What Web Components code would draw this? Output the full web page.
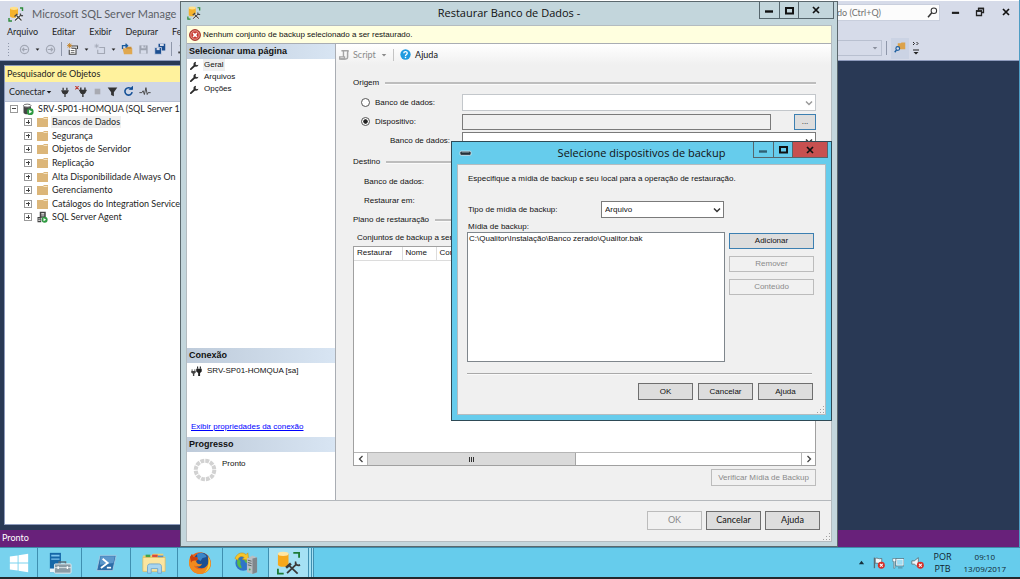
<!DOCTYPE html>
<html lang="pt-BR">
<head>
<meta charset="utf-8">
<title>Microsoft SQL Server Management Studio</title>
<style>
html, body { margin: 0; height: 100%; background: #14181c; overflow: hidden; }
body { font: 9px/12px Lato, "Open Sans", sans-serif; color: #1e1e1e; }
</style>
</head>
<body>
<desk-top>
  <ide-window></ide-window>
  <restore-dialog></restore-dialog>
  <device-dialog></device-dialog>
  <task-bar slot="taskbar"></task-bar>
</desk-top>
<script>
const define = (name, css, html) => customElements.define(name, class extends HTMLElement {
  constructor() {
    super();
    const t = document.createElement('template');
    t.innerHTML = `<style>:host,*{box-sizing:border-box}button,input,select,a{font:inherit;color:inherit}${css}</style>` +
      (typeof html === 'function' ? html(this) : html);
    this.attachShadow({ mode: 'open' }).append(t.content.cloneNode(true));
  }
});

/* Icons: name -> [viewBox, content] */
const GLYPHS = {
  ssms: ['0 0 16 16', '<path d="M2 2v8c0 1.200 1.800 1.800 4 1.800s4-.6 4-1.800V2z" fill="#f5b22c"/><ellipse cx="6" cy="2.300" rx="4" ry="1.600" fill="#ffe08a"/><path d="M12 2h2.500v3M1 12v3h3" fill="none" stroke="#2c8a3a" stroke-width="1.400"/><path d="M7 14.500l6-5.500M8.500 9.500l5 5" stroke="#fff" stroke-width="2.600"/><path d="M7 14.500l6-5.500M8.500 9.500l5 5" stroke="#444" stroke-width="1.300"/><path d="M6.500 10.500l2.800-2.500M12.500 7.500c-.6 1.500.8 2.800 2.500 2" stroke="#444" fill="none" stroke-width="1.300"/>'],
  back: ['0 0 16 16', '<circle cx="8" cy="8" r="6" fill="none" stroke="#a3a8b5" stroke-width="1.800"/><path d="M12 8H5M7.500 5.500L5 8l2.500 2.500" fill="none" stroke="#a3a8b5" stroke-width="1.800"/>'],
  fwd: ['0 0 16 16', '<circle cx="8" cy="8" r="6" fill="none" stroke="#a3a8b5" stroke-width="1.800"/><path d="M4 8h7M8.500 5.500L11 8l-2.500 2.500" fill="none" stroke="#a3a8b5" stroke-width="1.800"/>'],
  newp: ['0 0 16 16', '<path d="M6 4h8v4M3 9v6h9V7H6" fill="#fff" stroke="#424242" stroke-width="1.400"/><path d="M5 10h5M5 12.500h5" stroke="#424242"/><path d="M3.500 0v7M0 3.500h7M1 1l5 5M6 1L1 6" stroke="#c27d1a" stroke-width="1.100"/>'],
  item: ['0 0 16 16', '<path d="M7 6h7v8H5V9" fill="none" stroke="#a3a8b5" stroke-width="1.500"/><path d="M3.500 1v6M.5 4h6M1.500 2l4 4M5.500 2l-4 4" stroke="#a3a8b5"/>'],
  open: ['0 0 16 16', '<path d="M2 7h13v8H4z" fill="#e0a850"/><path d="M7 5h7v3H7z" fill="#c98f38"/><path d="M2 8V3.500h6M6 1l2.700 2.500L6 6" fill="none" stroke="#1c5d9e" stroke-width="1.800"/>'],
  save: ['0 0 16 16', '<path d="M2 2h12v12H2z" fill="#9ea4b1"/><path d="M5 2h6v4H5zM4 9h8v5H4z" fill="#d6dbe9"/><path d="M8 2h2v3H8z" fill="#9ea4b1"/>'],
  saveall: ['0 0 16 16', '<path d="M6 1h9v9H6z" fill="#1c4f91"/><path d="M8 1h5v3H8z" fill="#d6dbe9"/><path d="M1 6h9v9H1z" fill="#1c4f91" stroke="#d6dbe9"/><path d="M3.500 6.500h4v3h-4z" fill="#d6dbe9"/>'],
  query: ['0 0 16 16', '<path d="M5 2h9v8H7z" fill="none" stroke="#424242" stroke-width="1.500"/><path d="M7 4h5M7 7h5" stroke="#424242"/><path d="M2 12h4v3H2z" fill="#424242"/>'],
  find: ['0 0 16 16', '<path d="M5 3h4l1-1h5v9H5z" fill="#dca24a"/><circle cx="5" cy="10" r="2.500" fill="#d6dbe9" stroke="#1c5d9e" stroke-width="1.500"/><path d="M3.300 12L1 15" stroke="#1c5d9e" stroke-width="1.800"/>'],
  lens: ['0 0 16 16', '<circle cx="10" cy="5.500" r="4" fill="none" stroke="#333" stroke-width="1.500"/><path d="M7 8.500L1.500 15" stroke="#333" stroke-width="2.200"/>'],
  tri: ['0 0 8 8', '<path d="M1 2.500h6L4 6z" fill="currentColor"/>'],
  plug: ['0 0 16 16', '<path d="M5 1v4M11 1v4" stroke="#333" stroke-width="2"/><path d="M2 5h12v2h-1c0 3-2 4-4 4.500V16H7v-4.500C5 11 3 10 3 7H2z" fill="#333"/>'],
  unplug: ['0 0 18 16', '<path d="M8 2v4M14 2v4" stroke="#333" stroke-width="2"/><path d="M5.500 5.500h11v2h-1c0 3-2 3.800-3.500 4.300V16h-2v-4.200C8.500 11.300 6.500 10.500 6.500 7.500h-1z" fill="#333"/><path d="M0 0l5 5M5 0L0 5" stroke="#c0392b" stroke-width="1.500"/>'],
  stop: ['0 0 16 16', '<path d="M3 3h10v10H3z" fill="#a8aab2"/>'],
  filter: ['0 0 16 16', '<path d="M1 2h14L10 9v6l-4-2V9z" fill="#333"/>'],
  refresh: ['0 0 16 16', '<path d="M12.500 5A5.300 5.300 0 1 0 13.300 9" fill="none" stroke="#124f96" stroke-width="2.300"/><path d="M8 5.500h6.500V-.5z" fill="#124f96"/>'],
  pulse: ['0 0 18 16', '<path d="M0 9h4l2-3 2 6 2.500-11 2 11 1.500-3h4" fill="none" stroke="#444" stroke-width="1.500"/>'],
  server: ['0 0 16 16', '<path d="M2 3.500v9C2 14 4 15 7 15s5-1 5-2.500v-9z" fill="#444"/><ellipse cx="7" cy="3.500" rx="5" ry="2" fill="#fff" stroke="#444"/><circle cx="11" cy="11.500" r="4.500" fill="#2f9a41"/><path d="M9.500 9v5l4-2.500z" fill="#fff"/>'],
  agent: ['0 0 16 16', '<path d="M5 1h8v8H5zM2 8h5v7H2z" fill="#444"/><path d="M7 3h4v1.500H7zM7 6h4v1H7zM3 10h3v1H3zM3 12h3v1H3z" fill="#fff"/><circle cx="11.500" cy="11.500" r="4" fill="#2f9a41"/><path d="M10 9.300v4.400l3.500-2.200z" fill="#fff"/>'],
  folder: ['0 0 12 12', '<path d="M1 2h6l1-1h4v10H1z" fill="#dcb679"/><path d="M7.500 2.500h4" stroke="#f4e3c4"/>'],
  error: ['0 0 16 16', '<circle cx="8" cy="8" r="7.300" fill="#c8372d" stroke="#8b1a14"/><circle cx="8" cy="8" r="5.600" fill="none" stroke="#f0bdb8"/><path d="M5.500 5.500l5 5M10.500 5.500l-5 5" stroke="#fff" stroke-width="2"/>'],
  wrench: ['0 0 16 16', '<path d="M1.500 14.500L8 8.500" stroke="#2b2b2b" stroke-width="3.200" stroke-linecap="round"/><path d="M10.500 1.200a4.600 4.600 0 1 0 4.600 5.600l-3 .8-2.500-2 .9-2.500z" fill="#2b2b2b"/>'],
  script: ['0 0 16 16', '<path d="M5.500 2.500H14c-1.500.5-1.500 1.500-1.500 3V12c0 1.500-1 2.500-2.500 2.500H2" fill="none" stroke="#a5a5a5" stroke-width="2.200"/><path d="M3.500 2.500h3V12M1 11.500h7v3H1z" fill="none" stroke="#a5a5a5" stroke-width="2"/>'],
  help: ['0 0 16 16', '<circle cx="8" cy="8" r="7.500" fill="#1e9be0"/><path d="M5.500 6.300C5.500 3 10.500 3 10.500 6.200 10.500 8 8 8 8 10" fill="none" stroke="#fff" stroke-width="1.900"/><path d="M7 11.300h2v2H7z" fill="#fff"/>'],
  conn: ['0 0 20 18', '<path d="M12 1v4M17 1v4" stroke="#222" stroke-width="2"/><path d="M9.500 5h10v5l-3 2.500V18h-3.500v-5.500L9.500 10z" fill="#222"/><path d="M2 6v4M7 6v4" stroke="#444" stroke-width="1.600"/><path d="M.5 9h8v3L6 14v4H3.500v-4L.5 12z" fill="#444"/>'],
  chev: ['0 0 8 8', '<path d="M1 2.500l3 3 3-3" fill="none" stroke="currentColor" stroke-width="1.500"/>'],
  left: ['0 0 8 8', '<path d="M5.500 1l-3 3 3 3" fill="none" stroke="#444" stroke-width="1.300"/>'],
  right: ['0 0 8 8', '<path d="M2.500 1l3 3-3 3" fill="none" stroke="#444" stroke-width="1.300"/>'],
  min: ['0 0 10 10', '<path d="M1 6.500h8" stroke="currentColor" stroke-width="2.400"/>'],
  max: ['0 0 10 10', '<path d="M1.800 2.800h6.400v5H1.800z" fill="none" stroke="#111" stroke-width="1.800"/>'],
  close: ['0 0 10 10', '<path d="M2 2l6 6M8 2L2 8" stroke="#111" stroke-width="1.700"/>'],
  restore: ['0 0 10 10', '<path d="M3.500 3.500V1.500h5v4H6.500M1.500 4h5v4.500h-5z" fill="none" stroke="#222" stroke-width="1.300"/><path d="M3 1.500h6M1 4h6" stroke="#222" stroke-width="1.500"/>'],
  over: ['0 0 6 14', '<path d="M0 1l1.500 1.500L0 4M3.500 1L5 2.500 3.500 4M0 9h6" fill="none" stroke="#222"/><path d="M.5 11h5L3 13.500z" fill="#222"/>'],
  drive: ['0 0 14 8', '<rect x="1" y="2" width="12" height="4.500" rx="1.500" fill="#26323a" stroke="#e8f4fa" stroke-width=".8"/><path d="M3 3h8" stroke="#8fa3ad"/>'],
  grip: ['0 0 8 8', '<path d="M6 0h1v1H6zM3 3h1v1H3zM6 3h1v1H6zM0 6h1v1H0zM3 6h1v1H3zM6 6h1v1H6z" fill="#a0a0a0"/>'],
  spin: ['0 0 24 24', '<circle cx="12" cy="12" r="9.300" fill="none" stroke="#d2d2d2" stroke-width="4" stroke-dasharray="3.870 1"/>'],
  start: ['0 0 24 24', '<path d="M2 5l8.500-1.300V11.500H2zM11.500 3.500L22 2v9.500H11.500zM2 12.500h8.500v7.800L2 19zM11.500 12.500H22V22l-10.500-1.500z" fill="#fff"/>'],
  manager: ['0 0 26 26', '<path d="M2 2h12v21H2z" fill="#1567a8"/><path d="M3.500 4h9v2h-9zM3.500 8h9v1.500h-9z" fill="#7cc4ee"/><path d="M2 19h8v4H2z" fill="#e8f3fa"/><path d="M12 14v-2h7v2" fill="none" stroke="#5d6f7a" stroke-width="1.600"/><rect x="7" y="14" width="18" height="10" rx="1" fill="#8a9ba6" stroke="#e6eef2"/><path d="M7 18h18" stroke="#dfe8ec"/><path d="M11 16.500v3M21 16.500v3" stroke="#fff" stroke-width="1.500"/>'],
  shell: ['0 0 26 22', '<path d="M6 2h19l-4 18H2z" fill="#2d6da8" stroke="#a9cbe4"/><path d="M6.500 3h17l-1.800 8-16 2z" fill="#5c98cc"/><path d="M9 6l6 5-8 6" fill="none" stroke="#fff" stroke-width="2.200"/><path d="M14 16.500h5" stroke="#fff" stroke-width="2"/>'],
  explorer: ['0 0 28 24', '<path d="M2 4h9l2-2h11v3h2v16H2z" fill="#efcf72"/><path d="M5 3h5v3H5z" fill="#3fa34d"/><path d="M12 3h6v3h-6z" fill="#d9483b"/><path d="M18 4h6v3h-6z" fill="#4b8fd0"/><path d="M2 6h24v15H2z" fill="#fbe5a0" stroke="#dcb75a" stroke-width=".7"/><path d="M7 23v-7c0-2 1-3 3-3h9c2 0 3 1 3 3v7h-4v-5h-7v5z" fill="#a9d5f0" stroke="#6fa6ce"/>'],
  firefox: ['0 0 24 24', '<circle cx="12" cy="12" r="10.800" fill="#e8641b"/><circle cx="13.500" cy="9.500" r="7.800" fill="#1d4f92"/><path d="M9 3c4-2.500 9 0 9.500 3l-4 1-2 3-3-2z" fill="#3c86c8"/><path d="M2 6L4 3l1.500 3L9 6l1 2.500-2 1.200c0 2.500 3 4.300 6 3-1 3-5 4-8 1.500C7 19 16 20 19.500 14 21 11 20.500 7 19.500 5.500c3.500 3 4.300 8.500 2.300 12C18.500 23.500 10 24.500 5 20.500 1 17 0 11 2 6z" fill="#f08a1e"/><path d="M20 5.800c2.500 3 3 8 1.200 11.200-1 2-3 4-5 4.800 4-4 5.300-10 3.800-16z" fill="#fbd03b"/><path d="M2 6L4 3l1.500 3L9 6l1 2.500-2 1.200c-2-.7-4 0-5 2z" fill="#c9400f"/>'],
  iis: ['0 0 26 26', '<circle cx="10" cy="13" r="8.500" fill="#2f74c8"/><path d="M4 9c2 0 4 2 3 4s2 3 1 6c-3-1-6-4-4-10zM12 6c3 1 5 3 5 6l-4 1-2-3z" fill="#58b947"/><path d="M1 8C4 1 10 1 13 4l2-2 1 8-7-1 2-2C8 5 5 6 4 10z" fill="#f7c52b" stroke="#c98d12" stroke-width=".6"/><path d="M14 8l6-3 5 2v16l-5 2-6-2z" fill="#b9bfc4"/><path d="M20 8l5-1v16l-5 2z" fill="#7f868c"/><path d="M15 10l4 1M15 12.500l4 1M15 15l4 1" stroke="#565c61"/><circle cx="17" cy="20" r="1" fill="#4caf50"/>'],
  ssmsbig: ['0 0 26 26', '<path d="M2 4v11c0 1.700 2.500 2.500 5.500 2.500S13 16.700 13 15V4z" fill="#f6a81c"/><ellipse cx="7.500" cy="4" rx="5.500" ry="2.300" fill="#ffe6a3"/><path d="M18 3h6v5M2 19.500v5h6" fill="none" stroke="#1c7a35" stroke-width="1.900"/><path d="M11.500 24l9.500-9M14 16.500l8.500 8" stroke="#3a3a3a" stroke-width="1.900"/><path d="M10.500 18.500l5-4.500" stroke="#3a3a3a" stroke-width="2.600"/><path d="M20.500 12c-1 3 1.800 4.800 4.500 3.500" fill="none" stroke="#3a3a3a" stroke-width="1.800"/>'],
  up: ['0 0 8 8', '<path d="M1 6h6L4 2z" fill="#16303c"/>'],
  flag: ['0 0 16 16', '<path d="M3 2v13" stroke="#5b6b73" stroke-width="1.600"/><path d="M4 3c3-1.500 4 1.500 8 0v6c-4 1.500-5-1-8 0z" fill="#eef6fa" stroke="#5b6b73"/><circle cx="11.500" cy="11.500" r="4.300" fill="#d6302a"/><path d="M9.800 9.800l3.400 3.400M13.200 9.800l-3.400 3.400" stroke="#fff" stroke-width="1.300"/>'],
  net: ['0 0 16 16', '<path d="M6 3h9v8H6z" fill="#9fdcf2" stroke="#f4fbff" stroke-width="1.600"/><path d="M5 2h11v10H5zM8 14.500h6" fill="none" stroke="#4b5d66" stroke-width=".8"/><path d="M1 2h4v4H3.800v9H2.200V6H1z" fill="#f4fbff" stroke="#4b5d66" stroke-width=".7"/>'],
  vol: ['0 0 16 16', '<path d="M1 6h3l5-4v12l-5-4H1z" fill="#eef6fa" stroke="#5b6b73"/><circle cx="11.500" cy="11.500" r="4.300" fill="#d6302a"/><path d="M9.800 9.800l3.400 3.400M13.200 9.800l-3.400 3.400" stroke="#fff" stroke-width="1.300"/>']
};
define('ui-icon', ':host{display:inline-block;flex:none}svg{display:block;width:100%;height:100%}', '<svg aria-hidden="true"></svg>');
const paint = root => root.querySelectorAll('ui-icon').forEach(i => {
  const [box, body] = GLYPHS[i.getAttribute('name')];
  const svg = i.shadowRoot.querySelector('svg');
  svg.setAttribute('viewBox', box);
  svg.innerHTML = body;
  i.style.width = i.getAttribute('w') + 'px';
  i.style.height = (i.getAttribute('h') || i.getAttribute('w')) + 'px';
});
const icon = (n, w, h = w) => `<ui-icon name="${n}" w="${w}" h="${h}"></ui-icon>`;

/* Desktop: windows float over the area, the task bar closes it */
define('desk-top', `
  :host{display:flex;flex-direction:column;height:100vh;position:relative}
  ::slotted(ide-window){flex:1;min-height:0}`, '<slot></slot><slot name="taskbar"></slot>');

/* Push button */
define('push-button', `
  :host{display:block}
  button{display:block;width:100%;height:100%;padding:0;border:1px solid #6f6f6f;background:#ddd;color:#111;border-radius:0}
  :host([focus]) button{border-color:#3c7fb1}
  :host([off]) button{border-color:#bcbcbc;background:#f1f1f1;color:#8a8a8a}`,
  el => `<button type="button"${el.hasAttribute('off') ? ' disabled' : ''}><slot></slot></button>`);

/* Window frame with title bar */
define('window-frame', `
  :host{display:flex;flex-direction:column;background:var(--frame);border:1px solid var(--edge,#5b686d)}
  header{display:grid;grid-template-columns:77px 1fr 77px;height:var(--bar);align-items:start}
  .ico{padding:var(--icopad)}
  h1{margin:0;font:11px/22px "Open Sans",sans-serif;text-align:center;color:#111;white-space:nowrap}
  nav{display:flex;justify-content:flex-end;padding-right:3px}
  button{height:var(--btn);padding:0;border:1px solid #56666d;border-top:0;margin-left:-1px;background:none;display:grid;place-items:center;width:21px;color:var(--mincol,#111)}
  button:last-child{width:36px;background:var(--close,none)}
  section{flex:1;min-height:0;margin:0 var(--side) var(--base);display:flex;flex-direction:column;background:#f0f0f0;border:1px solid #b4bcc0}`,
  el => `<header><span class="ico">${icon(el.getAttribute('icon'), el.getAttribute('icon') === 'drive' ? 13 : 14, el.getAttribute('icon') === 'drive' ? 8 : 14)}</span><h1>${el.getAttribute('heading')}</h1>
  <nav><button aria-label="Minimizar">${icon('min', 10)}</button><button aria-label="Maximizar">${icon('max', 11)}</button><button aria-label="Fechar">${icon('close', 10)}</button></nav></header>
  <section><slot></slot></section>`);

/* Object explorer tree */
define('tree-row', `
  :host{display:flex;align-items:center;gap:3px;padding-left:19px;white-space:nowrap}
  :host([root]){padding-left:5px}
  i{width:8px;height:8px;margin-right:1px;border:1px solid #9a9a9a;background:linear-gradient(#444,#444) center/4px 1px no-repeat}
  :host(:not([root])) i{background:linear-gradient(#444,#444) center/4px 1px no-repeat,linear-gradient(#444,#444) center/1px 4px no-repeat}
  span{padding:0 1px}
  :host([on]) span{background:#efefef}`,
  el => `<i></i>${icon(el.getAttribute('icon') || 'folder', 12)}<span><slot></slot></span>`);
define('object-explorer', `
  :host{display:flex;flex-direction:column;background:#fff;border:1px solid #8e9bbc}
  h2{margin:0;font:inherit;line-height:16px;padding-left:2px;background:#fff29d}
  .bar{display:flex;align-items:center;gap:5px;height:20px;padding-left:4px;background:#cfd6e5;border-bottom:1px solid #b8c0d2}
  .bar button{border:0;background:none;padding:0;margin-right:3px;display:flex;align-items:center;gap:1px}
  .tree{display:grid;grid-auto-rows:1fr;height:122px}`,
  `<h2>Pesquisador de Objetos</h2>
  <div class="bar"><button>Conectar ${icon('tri', 6)}</button>${icon('plug', 10)}${icon('unplug', 13, 11)}${icon('stop', 9)}${icon('filter', 11)}${icon('refresh', 11)}${icon('pulse', 12, 10)}</div>
  <div class="tree"><tree-row root icon="server">SRV-SP01-HOMQUA (SQL Server 11.</tree-row><tree-row on>Bancos de Dados</tree-row><tree-row>Segurança</tree-row><tree-row>Objetos de Servidor</tree-row><tree-row>Replicação</tree-row><tree-row>Alta Disponibilidade Always On</tree-row><tree-row>Gerenciamento</tree-row><tree-row>Catálogos do Integration Service</tree-row><tree-row icon="agent">SQL Server Agent</tree-row></div>`);

/* Main application window */
define('ide-window', `
  :host{display:flex;flex-direction:column;background:#293955;border-right:1px solid #4f9dc4}
  .top{display:flex;justify-content:space-between;height:61px;background:#d6dbe9;border-top:1px solid #fff;border-bottom:1px solid #8e9bbc}
  .left,.right{display:flex;flex-direction:column}
  .left{width:190px}
  .right{width:182px}
  h1{display:flex;align-items:center;gap:8px;margin:0;padding-left:8px;height:25px;font:11px/25px Lato,sans-serif;color:#5c5f66;white-space:nowrap}
  .menu{display:flex;gap:14px;padding-left:7px;line-height:12px}
  .menu a{color:inherit;text-decoration:none}
  .tools{display:flex;align-items:center;gap:5px;height:24px;padding-left:7px;color:#222;white-space:nowrap}
  .grip{width:4px;height:14px;margin-right:3px;background:radial-gradient(#8f97aa 40%,transparent 45%) 0 0/3px 3px}
  .sep{width:1px;height:14px;background:#8f97aa}
  .find{display:flex;align-items:center;height:25px}
  .box{display:flex;align-items:center;width:103px;height:17px;background:#fcfcfc;border:1px solid #c9cfdd;border-left:0;padding-right:1px}
  .box input{flex:1;min-width:0;border:0;background:none;padding:0;color:#717171}
  .sys{flex:1;display:flex;justify-content:space-around;padding:0 0 2px 3px}
  .right .tools{margin-top:12px;padding:0;gap:4px}
  .combo{width:45px;height:16px;border:1px solid #b9c0d0;border-left:0;display:flex;align-items:center;justify-content:flex-end;padding-right:3px;color:#8a8f9c}
  .fb{background:#cbd3e4;padding:3px}
  .body{flex:1;display:flex;padding:4px 0 5px 4px}
  object-explorer{width:24%}
  footer{height:17px;line-height:16px;padding-left:2px;background:#68217a;color:#fff}`,
  `<div class="top"><div class="left"><h1>${icon('ssms', 16)}Microsoft SQL Server Manage</h1>
  <nav class="menu"><a href="#">Arquivo</a><a href="#">Editar</a><a href="#">Exibir</a><a href="#">Depurar</a><a href="#">Fe</a></nav>
  <div class="tools"><span class="grip"></span>${icon('back', 11)}${icon('tri', 5)}${icon('fwd', 11)}<span class="sep"></span>${icon('newp', 12)}${icon('tri', 5)}${icon('item', 12)}${icon('tri', 5)}${icon('open', 12)}${icon('save', 11)}${icon('saveall', 12)}<span class="sep"></span>${icon('query', 10)}</div></div>
  <div class="right"><div class="find"><div class="box"><input aria-label="Início Rápido" value="do (Ctrl+Q)">${icon('lens', 11)}</div><div class="sys">${icon('min', 9)}${icon('restore', 10)}${icon('close', 10)}</div></div>
  <div class="tools"><span class="combo">${icon('tri', 6)}</span><span class="sep"></span><span class="fb">${icon('find', 12)}</span>${icon('over', 6, 14)}</div></div></div>
  <div class="body"><object-explorer></object-explorer></div><footer>Pronto</footer>`);

define('drop-down', `
  :host{display:grid;height:17px;color:#333}
  select,ui-icon{grid-area:1/1}
  select{appearance:none;width:100%;height:100%;border:1px solid #7a7a7a;border-radius:0;background:#fff;padding:0 3px;color:#111;opacity:1}
  ui-icon{justify-self:end;align-self:center;margin-right:3px;pointer-events:none}
  :host([off]){color:#9a9a9a}:host([off]) select{border-color:#c3c7cb}`,
  el => `<select aria-label="${el.getAttribute('label')}"${el.hasAttribute('off') ? ' disabled' : ''}><option>${el.getAttribute('value') || ''}</option></select>${icon('chev', 8)}`);

define('group-title', `
  :host{display:flex;align-items:center;gap:6px;line-height:12px}
  :host::after{content:"";flex:1;height:2px;background:#bdbdbd;border-bottom:1px solid #fafafa}`, '<slot></slot>');

/* Left pane of the restore dialog */
define('page-pane', `
  :host{display:flex;flex-direction:column;background:#fff;border-right:1px solid #a9adb3}
  h2{margin:0;font:bold 9px/15px "Liberation Sans",Arial,sans-serif;padding-left:2px;background:linear-gradient(90deg,#becbda,#d8e5f3);color:#111}
  ul{list-style:none;margin:0;padding:0 0 0 3px;flex:1}
  li{display:flex;align-items:center;gap:4px;height:12px}
  li span{padding:0 1px}
  li.on span{background:#efefef}
  .conn{height:74px;display:flex;flex-direction:column;justify-content:space-between;padding:2px 0 4px 4px}
  .conn div{display:flex;align-items:center;gap:5px}
  a{color:#00f}
  .prog{height:48px;display:flex;gap:5px;padding:6px}`,
  `<h2>Selecionar uma página</h2><ul><li class="on">${icon('wrench', 9)}<span>Geral</span></li><li>${icon('wrench', 9)}<span>Arquivos</span></li><li>${icon('wrench', 9)}<span>Opções</span></li></ul>
  <h2>Conexão</h2><div class="conn"><div>${icon('conn', 11, 12)}SRV-SP01-HOMQUA [sa]</div><a href="#">Exibir propriedades da conexão</a></div>
  <h2>Progresso</h2><div class="prog">${icon('spin', 24)}<span>Pronto</span></div>`);

/* Backup sets grid with its scroll bar */
define('backup-sets', `
  :host{display:flex;flex-direction:column;background:#fff;border:1px solid #a0a0a0}
  table{border-collapse:collapse;table-layout:fixed;width:100%}
  th{font:inherit;height:13px;padding:0 0 0 3px;text-align:left;background:#fff;border-right:1px solid #dcdcdc;border-bottom:1px solid #dcdcdc}
  .bar{margin-top:auto;display:grid;grid-template-columns:13px 1fr 13px;height:13px;border-top:1px solid #b5b5b5}
  .bar button{border:0;padding:0;background:#fff;display:grid;place-items:center}
  .track{border:solid #b5b5b5;border-width:0 1px}
  .thumb{width:48%;height:100%;background:#dadada;border-right:1px solid #a6a6a6;display:flex;justify-content:center;align-items:center;gap:1px}
  .thumb b{width:1px;height:5px;background:#333}`,
  `<table><colgroup><col style="width:48px"><col style="width:34px"><col></colgroup><thead><tr><th>Restaurar</th><th>Nome</th><th>Com</th></tr></thead></table>
  <div class="bar"><button aria-label="Rolar à esquerda">${icon('left', 8)}</button><div class="track"><div class="thumb"><b></b><b></b><b></b></div></div><button aria-label="Rolar à direita">${icon('right', 8)}</button></div>`);

define('restore-dialog', `
  :host{position:absolute;left:180px;right:182px;top:1px;bottom:32px;font:8px/12px "Liberation Sans",Arial,sans-serif;color:#111;white-space:nowrap}
  window-frame{height:100%;--frame:#c3d6dc;--bar:23px;--btn:17px;--side:5px;--base:4px;--icopad:4px 0 0 6px}
  .msg{display:flex;align-items:center;gap:2px;height:18px;padding-left:2px;background:#ffffdf;border-bottom:1px solid #a9adb3}
  .mid{flex:1;min-height:0;display:grid;grid-template-columns:149px 1fr}
  .page{display:flex;flex-direction:column;min-width:0}
  .tools{display:flex;align-items:center;gap:4px;height:21px;padding-left:3px;background:linear-gradient(#fff,#f0f0f0);font:9px/12px Lato,sans-serif}
  .tools .off{color:#8a8a8a;display:flex;align-items:center;gap:3px}
  .tools i{width:1px;height:12px;background:#c4c4c4;margin:0 2px}
  .form{flex:1;display:flex;flex-direction:column;padding:12px 15px 14px 17px}
  .row{display:grid;grid-template-columns:109px 1fr;align-items:center;height:19px}
  .row.top{margin-top:4px}
  label{display:flex;align-items:center;gap:5px;padding-left:8px}
  label.deep{padding-left:37px}
  label.in{padding-left:11px}
  .dst{margin-top:6px}
  .plan{margin-top:4px}
  input[type=radio]{appearance:none;width:9px;height:9px;margin:0;border:1px solid #555;border-radius:50%;background:#fff}
  input[type=radio]:checked{background:radial-gradient(#222 38%,#fff 52%)}
  .dev{display:flex;justify-content:space-between}
  .dev input{width:309px;height:16px;border:1px solid #7a7a7a;background:#f0f0f0;padding:0 3px}
  .dev push-button{width:22px;height:16px}
  .sets{padding:6px 0 2px 4px}
  backup-sets{flex:1}
  .verify{align-self:flex-end;width:105px;height:17px;margin-top:3px}
  .foot{height:41px;display:flex;align-items:center;justify-content:flex-end;gap:4px;padding:0 11px 2px 0;border-top:1px solid #b4b8bc;position:relative;font:9px/12px Lato,sans-serif}
  .foot push-button{width:55px;height:19px}
  .foot ui-icon{position:absolute;right:0;bottom:0}`,
  `<window-frame icon="ssms" heading="Restaurar Banco de Dados -">
  <div class="msg">${icon('error', 12)}Nenhum conjunto de backup selecionado a ser restaurado.</div>
  <div class="mid"><page-pane></page-pane><div class="page">
   <div class="tools"><span class="off">${icon('script', 11)}Script&nbsp; ${icon('tri', 6)}</span><i></i>${icon('help', 11)}Ajuda</div>
   <div class="form">
    <group-title>Origem</group-title>
    <div class="row top"><label><input type="radio" name="src">Banco de dados:</label><drop-down off label="Banco de dados"></drop-down></div>
    <div class="row"><label><input type="radio" name="src" checked>Dispositivo:</label><div class="dev"><input aria-label="Dispositivo" readonly><push-button focus>...</push-button></div></div>
    <div class="row"><label class="deep">Banco de dados:</label><drop-down label="Banco de dados do dispositivo"></drop-down></div>
    <group-title class="dst">Destino</group-title>
    <div class="row top"><label class="in">Banco de dados:</label></div>
    <div class="row"><label class="in">Restaurar em:</label></div>
    <group-title class="plan">Plano de restauração</group-title>
    <div class="sets">Conjuntos de backup a ser</div>
    <backup-sets></backup-sets>
    <push-button class="verify" off>Verificar Mídia de Backup</push-button>
   </div></div></div>
  <div class="foot"><push-button off>OK</push-button><push-button>Cancelar</push-button><push-button>Ajuda</push-button>${icon('grip', 8)}</div>
  </window-frame>`);

define('device-dialog', `
  :host{position:absolute;left:451px;top:141px;width:381px;font:8px/12px "Liberation Sans",Arial,sans-serif;color:#111;white-space:nowrap}
  window-frame{--frame:#66ccec;--edge:#2e4a56;--bar:22px;--btn:16px;--side:5px;--base:5px;--icopad:7px 0 0 7px;--close:#c75050;--mincol:#2f6075}
  .form{padding:8px 12px 0 9px;position:relative}
  p{margin:0 0 16px 1px}
  .type{display:grid;grid-template-columns:133px 123px;align-items:center;margin-left:1px}
  .lab{display:block;margin:3px 0 0 1px;line-height:11px}
  .media{display:grid;grid-template-columns:258px 85px;gap:4px}
  .list{width:100%;height:130px;border:1px solid #7f868c;border-radius:0;background:#fff;padding:1px;margin:0;overflow:hidden;appearance:none}
  .list option{padding:0;min-height:10px;line-height:11px}
  .col{display:flex;flex-direction:column;gap:7px;padding-top:1px}
  .col push-button{height:16px}
  hr{border:0;border-top:1px solid #a9a9a9;border-bottom:1px solid #fafafa;margin:11px 1px 8px 0}
  .foot{display:flex;justify-content:flex-end;gap:5px;padding-bottom:14px}
  .foot push-button{width:55px;height:17px}
  .form>ui-icon{position:absolute;right:0;bottom:0}`,
  `<window-frame icon="drive" heading="Selecione dispositivos de backup"><div class="form">
  <p>Especifique a mídia de backup e seu local para a operação de restauração.</p>
  <div class="type"><span>Tipo de mídia de backup:</span><drop-down label="Tipo de mídia de backup" value="Arquivo"></drop-down></div>
  <label class="lab" for="media">Mídia de backup:</label>
  <div class="media"><select class="list" id="media" size="10"><option>C:\\Qualitor\\Instalação\\Banco zerado\\Qualitor.bak</option></select>
  <div class="col"><push-button focus>Adicionar</push-button><push-button off>Remover</push-button><push-button off>Conteúdo</push-button></div></div>
  <hr><div class="foot"><push-button>OK</push-button><push-button>Cancelar</push-button><push-button>Ajuda</push-button></div>${icon('grip', 8)}</div></window-frame>`);

define('task-bar', `
  :host{display:flex;height:32px;background:#66ccec;border-top:1px solid #3e8aa8;border-bottom:2px solid #23282c;color:#10242e;font:8px/12px "Open Sans",sans-serif}
  button{border:0;border-right:1px solid #3f8fb0;padding:0;display:grid;place-items:center;background:#78d2ee;color:inherit}
  button.on{background:#a5e1f4}
  .stack{width:5px;border-right:1px solid #3f8fb0;background:linear-gradient(90deg,#a5e1f4 2px,#3f8fb0 2px 3px,#a5e1f4 3px)}
  .tray{margin-left:auto;display:flex;align-items:center;gap:7px;padding-right:14px;text-align:center}
  .lang{margin:0 5px 0 3px;font-size:9px}`,
  [['start', 38, 22], ['manager', 44, 24], ['shell', 49, 22], ['explorer', 47, 26], ['firefox', 45, 24], ['iis', 46, 24], ['ssmsbig', 40, 25]]
    .map(([n, w, s], i) => `<button style="width:${w}px"${i === 6 ? ' class="on"' : ''} aria-label="${n}">${icon(n, s)}</button>`).join('') +
  `<span class="stack"></span><div class="tray">${icon('up', 7)}${icon('flag', 13)}${icon('net', 12)}${icon('vol', 13)}<span class="lang">POR<br>PTB</span><time>09:10<br>13/09/2017</time></div>`);

const walk = root => { paint(root); root.querySelectorAll('*').forEach(e => e.shadowRoot && walk(e.shadowRoot)); };
walk(document);
</script>
</body>
</html>
